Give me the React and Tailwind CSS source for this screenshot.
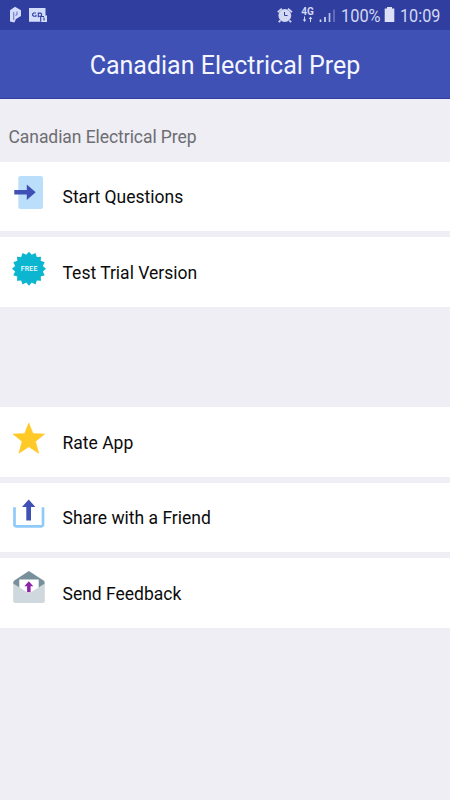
const badge = Array.from({ length: 32 }, (_, i) => {
  const r = i % 2 ? 14.1 : 17;
  const a = (i * Math.PI) / 16 - Math.PI / 2;
  return `${(29 + r * Math.cos(a)).toFixed(2)},${(31.7 + r * Math.sin(a)).toFixed(2)}`;
}).join(" ");

function StartIcon() {
  return (
    <>
      <rect x="18.3" y="15" width="24.7" height="33" rx="2.2" fill="#bbdefb" />
      <path d="M14.3 28.900h12.500v-5.500l8.900 7.800-8.900 7.800v-5.500H14.300z" fill="#3f51b5" />
    </>
  );
}

function FreeIcon() {
  return (
    <>
      <polygon points={badge} fill="#0cb5d0" />
      <text x="29.200" y="34" textAnchor="middle" fontSize="7" fontWeight="500" letterSpacing="0.200" fill="#f0fcfe">
        FREE
      </text>
    </>
  );
}

function StarIcon() {
  return (
    <path
      d="M28.800 16l4.200 10.600 11.600.5-9.100 7.300 3.200 11.900-9.900-6.500-9.900 6.500L22.100 34.400 13 27.100l11.600-.5z"
      fill="#ffc928"
      stroke="#ffc928"
      strokeWidth="0.600"
    />
  );
}

function ShareIcon() {
  return (
    <>
      <path d="M14.500 25.200V42.900a1.400 1.400 0 0 0 1.400 1.400H41.600a1.400 1.400 0 0 0 1.400-1.400V25.200" fill="none" stroke="#90caf9" strokeWidth="2.700" />
      <path d="M28.700 17.600L35.400 25H31v13.600h-4.700V25H22z" fill="#3f51b5" />
    </>
  );
}

function FeedbackIcon() {
  return (
    <>
      <path d="M28.900 13.100L43.500 22.400Q45 23.500 44.700 25.500L42 31H16L13.200 25.500Q13 23.500 14.300 22.400z" fill="#78909c" />
      <path d="M19.300 21.500H38.700V33L29 39l-9.700-6z" fill="#fff" />
      <path d="M13.200 25.500L29 35.600 44.800 25.500V43a2 2 0 0 1-2 2H15.200a2 2 0 0 1-2-2z" fill="#cfd8dc" />
      <path d="M28.800 23.300L33.300 28.300H30.600V34.300H27.100V28.300H24.400z" fill="#8e24aa" />
    </>
  );
}

function Row({ icon, label }) {
  return (
    <button className="flex h-[69.7px] w-full items-center bg-white text-left">
      <svg className="h-[70px] w-[62.5px] shrink-0" viewBox="0 0 62.5 70">
        {icon}
      </svg>
      <span className="pt-[2px] text-[17.5px] leading-5 text-[#0c0c0c]">{label}</span>
    </button>
  );
}

function StatusBar() {
  return (
    <div className="flex h-[30px] items-center bg-[#303f9f] text-[#d3d8f3]">
      <svg className="h-[30px] w-[60px]" viewBox="0 0 60 30">
        <path d="M10 10.200l5-3.400 6 3.500v5.700l-5 3-1.700 3.500-4.300-1z" fill="#d3dcfa" />
        <path d="M13.700 20V12M17 11.500v3l-1.500 1" fill="none" stroke="#6d79c4" strokeWidth="1.100" />
        <path d="M29 8h16.500v7.500H47V22H41v-.3H29z" fill="#d3dcfa" />
        <path d="M36 13h-2.300l-1.100 1v1.200l1.100 1H36v-1.500M38.300 17.300v-4.200h2.300l1 1v1.200l-1 1h-2.300M40.700 21.800v-5.300H44M44 17.500v3" fill="none" stroke="#303f9f" strokeWidth="1.100" />
      </svg>
      <svg className="ml-[214px] h-[30px] w-[64px]" viewBox="0 0 64 30">
        <g fill="none" stroke="#d3d8f3">
          <path d="M3.800 12.200l4-3.600M14 8.600l4 3.600M6.500 20.400L4.700 22.200M15.300 20.400l1.800 1.800" strokeWidth="1.700" />
        </g>
        <circle cx="10.800" cy="15.500" r="6.400" fill="#d3d8f3" />
        <path d="M10.500 12v3.500h3" fill="none" stroke="#303f9f" strokeWidth="1" />
        <text x="33.600" y="15" textAnchor="middle" fontSize="10" fontWeight="700" fill="#d3d8f3">4G</text>
        <path d="M31 16.500v3h1.300L30.500 22l-1.800-2.500H30v-3zM36 22v-3h-1.300l1.800-2.500 1.800 2.500H37v3z" fill="#d3d8f3" />
        <path d="M46.500 22v-2.500M51 22v-5" stroke="#d3d8f3" strokeWidth="1.700" />
        <path d="M55.500 22V13" stroke="#b6bee6" strokeWidth="1.700" />
        <path d="M60 22V9.500" stroke="#6873bd" strokeWidth="1.700" />
      </svg>
      <span className="ml-[3px] w-[39px] origin-left scale-x-[0.91] pt-[2px] text-[18px] leading-5">100%</span>
      <svg className="ml-[4px] h-[30px] w-[12px]" viewBox="0 0 12 30">
        <path d="M3 7h5v1.500h2.300V22H.7V8.500H3z" fill="#dde1f7" />
      </svg>
      <span className="ml-[4px] w-[42px] origin-left scale-x-[0.9] pt-[2px] text-[18px] leading-5">10:09</span>
    </div>
  );
}

export default function App() {
  return (
    <div className="flex h-[800px] w-[450px] flex-col overflow-hidden bg-[#eeeef4] font-['Roboto',sans-serif]">
      <StatusBar />
      <header className="flex h-[69px] items-center justify-center border-b border-[#303f9f] bg-[#3f51b5] pt-[4px]">
        <h1 className="text-[25px] leading-8 text-[#f4f6ff]">Canadian Electrical Prep</h1>
      </header>
      <main>
        <h2 className="flex h-[62.5px] items-center pt-[14px] pl-[8.5px] text-[17.5px] leading-5 tracking-[-0.06px] text-[#6d6d72]">
          Canadian Electrical Prep
        </h2>
        <section className="flex flex-col gap-[6px]">
          <Row icon={<StartIcon />} label="Start Questions" />
          <Row icon={<FreeIcon />} label="Test Trial Version" />
        </section>
        <section className="mt-[100px] flex flex-col gap-[6px]">
          <Row icon={<StarIcon />} label="Rate App" />
          <Row icon={<ShareIcon />} label="Share with a Friend" />
          <Row icon={<FeedbackIcon />} label="Send Feedback" />
        </section>
      </main>
    </div>
  );
}
